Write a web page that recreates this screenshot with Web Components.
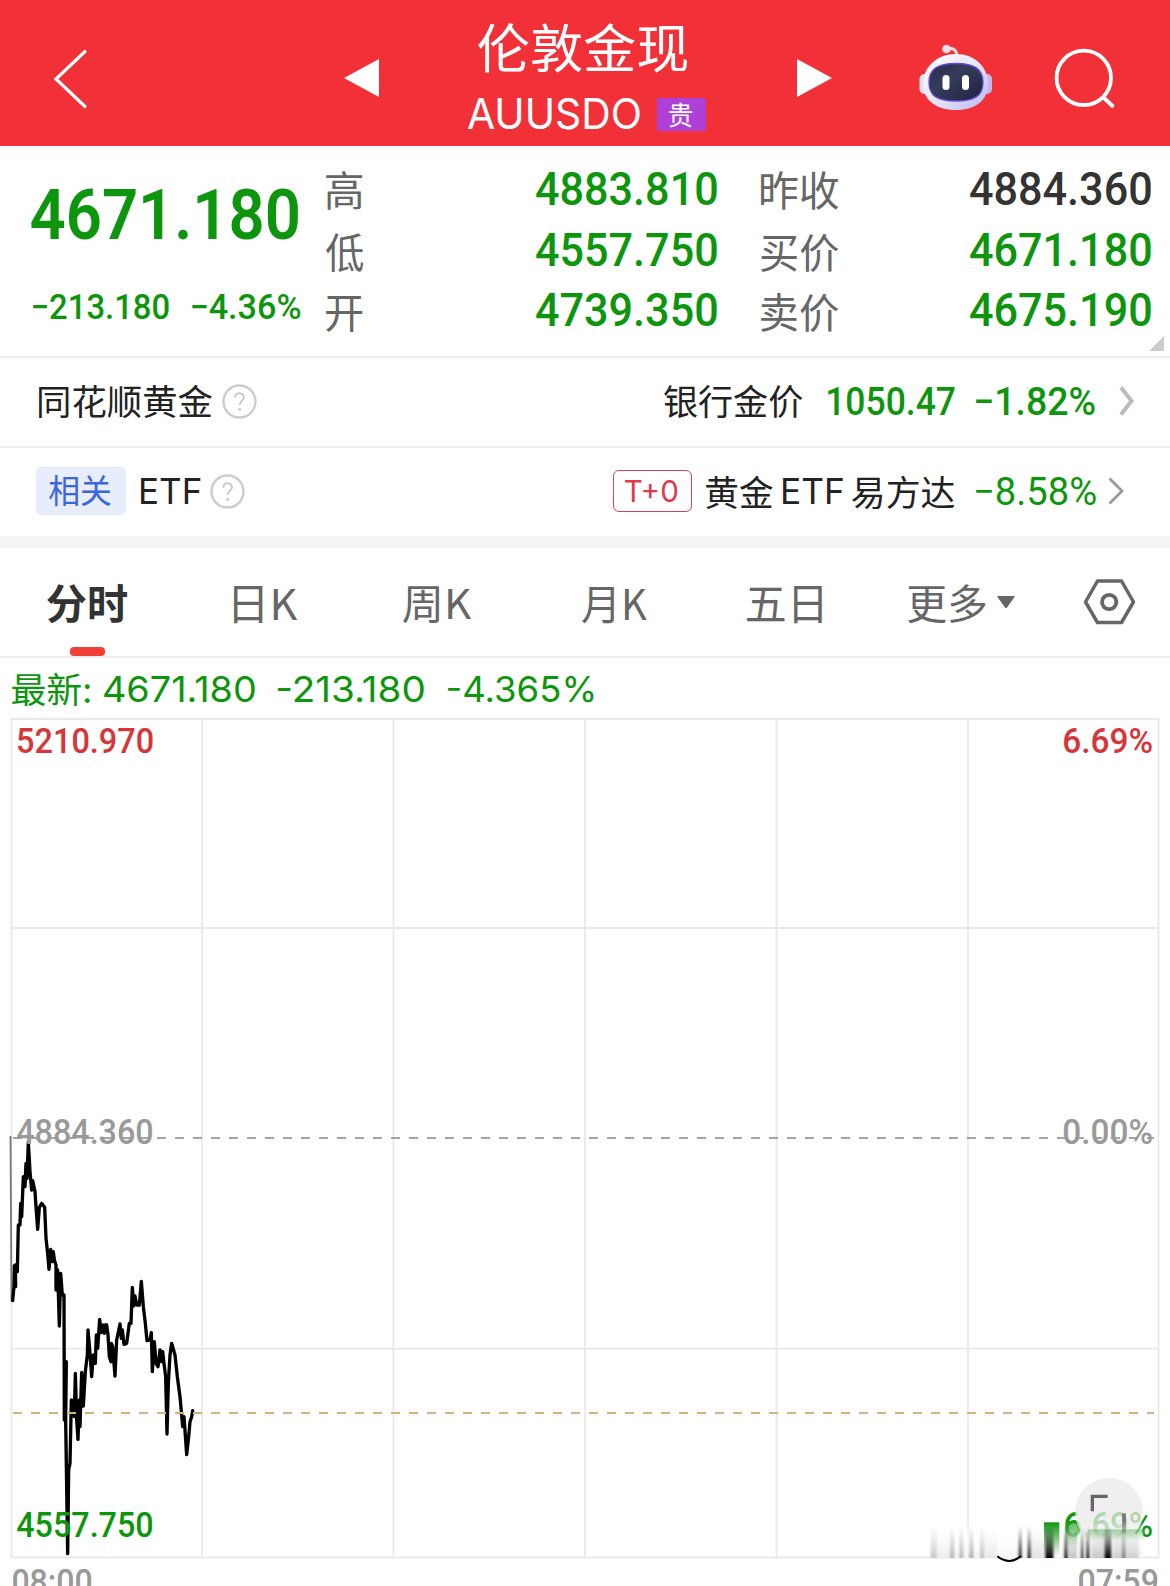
<!DOCTYPE html>
<html lang="zh-CN">
<head>
<meta charset="utf-8">
<title>伦敦金现</title>
<style>
html,body{margin:0;background:#fff}
body{width:1170px;height:1586px;overflow:hidden;font-family:"Noto Sans CJK SC",sans-serif}
</style>
</head>
<body>
<quote-page></quote-page>
<script>
const ctx = document.createElement('canvas').getContext('2d');
const FONTS = {
  cjk: '"Noto Sans CJK SC", sans-serif',
  num: 'Roboto, "Noto Sans CJK SC", sans-serif',
  ui: 'Inter, "Noto Sans CJK SC", sans-serif'
};

/* Text sized by its visible box: w and h are the extents of the glyphs. */
class InkText extends HTMLElement {
  connectedCallback() {
    const root = this.attachShadow({mode: 'open'});
    const w = +this.getAttribute('w'), h = +this.getAttribute('h');
    const wt = this.getAttribute('wt') || 400;
    const kind = this.getAttribute('f') || 'cjk';
    const fam = FONTS[kind];
    const drop = kind === 'cjk' ? .7 : kind === 'num' ? -.5 : 0;
    const text = this.textContent;
    ctx.font = `${wt} 200px ${fam}`;
    const m = ctx.measureText(text);
    const size = 200 * h / (m.actualBoundingBoxAscent + m.actualBoundingBoxDescent);
    const k = size / 200;
    const s = (w - .8) / ((m.actualBoundingBoxLeft + m.actualBoundingBoxRight) * k);
    root.innerHTML = `<style>
      :host{display:block;flex:none;width:${w}px;height:${h}px}
      span{display:block;width:max-content;white-space:pre;font:${wt} ${size}px/${h}px ${fam};transform-origin:0 0}
      i{display:inline-block;width:0;height:0}
    </style><span><slot></slot><i></i></span>`;
    const span = root.querySelector('span'), probe = root.querySelector('i');
    const base = probe.getBoundingClientRect().bottom - span.getBoundingClientRect().top;
    probe.remove();
    span.style.transform = `translate(${m.actualBoundingBoxLeft * k * s}px,${m.actualBoundingBoxAscent * k - base + drop}px) scaleX(${s})`;
  }
}

function define(name, css, html) {
  customElements.define(name, class extends HTMLElement {
    constructor() {
      super();
      this.attachShadow({mode: 'open'}).innerHTML = `<style>*{box-sizing:border-box}svg{display:block;flex:none}${css}</style>${html}`;
    }
  });
}

customElements.define('ink-text', InkText);

define('help-icon', ':host{display:block;flex:none;width:35px;height:35px}', `
<svg width="35" height="35" viewBox="0 0 35 35" fill="none" stroke="#ccc" stroke-width="2.4"><circle cx="17.5" cy="17.5" r="16"/><path d="M13.3 13.7c0-6 8.6-5.7 8.6-.4 0 3.5-4.3 3.5-4.3 7.7" stroke-width="2.1"/><circle cx="17.6" cy="25.3" r="1.5" fill="#ccc" stroke="none"/></svg>`);

define('app-header', `
:host{display:flex;align-items:flex-start;height:146px;background:#f13038;color:#fff}
.back{margin:48px 0 0 53px}.prev{margin:59px 0 0 256px}.next{margin:59px 0 0 91px}
.mid{width:238px;margin:23px 0 0 89px}.title{margin-left:10px}
.code{display:flex;margin-top:26px}
.tag{margin-left:16px;width:49px;height:33px;background:#ae40d8;border-radius:2px;padding:4px 0 0 12px}
.bot{margin:43px 0 0 85px}.find{margin:46px 0 0 59px}`, `
<svg class="back" width="35" height="62" viewBox="53 48 35 62" fill="none" stroke="#fff" stroke-width="3.2" stroke-linecap="round"><path d="M85 51.500 56 79l29 27.500"/></svg>
<svg class="prev" width="35" height="38" viewBox="0 0 35 38"><path d="M35 0v38L0 19z" fill="#fff"/></svg>
<div class="mid"><ink-text class="title" w="210" h="49">伦敦金现</ink-text>
<div class="code"><ink-text w="172.500" h="31.500" f="ui">AUUSDO</ink-text><div class="tag"><ink-text w="24" h="24">贵</ink-text></div></div></div>
<svg class="next" width="35" height="38" viewBox="0 0 35 38"><path d="M0 0v38l35-19z" fill="#fff"/></svg>
<svg class="bot" width="76" height="72" viewBox="918 42 76 72">
<defs><linearGradient id="shell" x1="0" y1="0" x2="1" y2="1"><stop offset="0" stop-color="#fff"/><stop offset=".55" stop-color="#e4e4f8"/><stop offset="1" stop-color="#b9b6f2"/></linearGradient>
<linearGradient id="face" x1="0" y1="0" x2="1" y2="1"><stop offset="0" stop-color="#252c49"/><stop offset=".4" stop-color="#353d5b"/><stop offset="1" stop-color="#1c2341"/></linearGradient></defs>
<path d="M948 48c6-2 10 1 10 8" fill="none" stroke="#f2dfea" stroke-width="3"/><circle cx="947.500" cy="48" r="4.300" fill="#f4dfe8"/>
<rect x="920.500" y="73" width="12" height="20" rx="5" fill="#dfdcf7"/><rect x="981" y="73" width="12" height="20" rx="5" fill="#c6b8f2"/>
<path d="M957 53c19 0 32 13 32 30 0 16-12 26-32 26s-33-10-33-26c0-17 14-30 33-30z" fill="url(#shell)"/>
<path d="M957 62.500c19 0 27 6 27 19s-8 18.500-27 18.500-27-5.500-27-18.500 8-19 27-19z" fill="url(#face)" stroke="#6548d8" stroke-width="1.300"/>
<rect x="943.500" y="74" width="7" height="15" rx="3.500" fill="#fff"/><rect x="963" y="74" width="7" height="15" rx="3.500" fill="#fff"/></svg>
<svg class="find" width="66" height="66" viewBox="1053 46 66 66" fill="none" stroke="#fff" stroke-width="3.800"><circle cx="1084.800" cy="77.800" r="27.200"/><path d="m1104 97 10.500 10"/></svg>`);

define('quote-summary', `
:host{display:flex;align-items:flex-start;height:212px;border-bottom:2px solid #eee;color:#0d960d}
.price{width:270px;margin:43px 0 0 31px}
.chg{display:flex;justify-content:space-between;margin:53.500px 0 0 2px;width:267.500px}
.col{display:flex;flex-direction:column;margin-top:25px}
.col>div{display:flex;justify-content:space-between;height:60.500px}
.a{width:392px;margin-left:24.500px}.b{width:391px;margin-left:43px}
.l{color:#666}.dark{color:#333}.corner{margin:190px 0 0 -3px}`, `
<div class="price"><ink-text w="268" h="51.500" f="num" wt="600">4671.180</ink-text>
<div class="chg"><ink-text w="136.500" h="26" f="num" wt="500">−213.180</ink-text><ink-text w="109" h="26" f="num" wt="500">−4.36%</ink-text></div></div>
<div class="col a">
<div><ink-text class="l" w="37" h="38">高</ink-text><ink-text w="181.500" h="34.500" f="num" wt="500">4883.810</ink-text></div>
<div><ink-text class="l" w="38" h="38" style="margin-top:1px">低</ink-text><ink-text w="181.500" h="34.500" f="num" wt="500">4557.750</ink-text></div>
<div><ink-text class="l" w="37" h="35.500" style="margin-top:2.500px">开</ink-text><ink-text w="181.500" h="34.500" f="num" wt="500">4739.350</ink-text></div></div>
<div class="col b">
<div><ink-text class="l" w="78" h="38">昨收</ink-text><ink-text class="dark" w="181.500" h="34.500" f="num" wt="500">4884.360</ink-text></div>
<div><ink-text class="l" w="78" h="38" style="margin-top:1px">买价</ink-text><ink-text w="181.500" h="34.500" f="num" wt="500">4671.180</ink-text></div>
<div><ink-text class="l" w="78" h="38" style="margin-top:.5px">卖价</ink-text><ink-text w="181.500" h="34.500" f="num" wt="500">4675.190</ink-text></div></div>
<svg class="corner" width="15" height="15"><path d="M15 0v15H0z" fill="#ccc"/></svg>`);

define('gold-row', `
:host{display:flex;align-items:center;height:90px;padding:0 35px 2px 39px;border-bottom:2px solid #eee;color:#222}
help-icon{margin-left:8.500px}.push{margin-left:auto}.g{color:#0d960d}`, `
<ink-text w="174" h="33.500">同花顺黄金</ink-text><help-icon></help-icon>
<ink-text class="push" w="139" h="33.500">银行金价</ink-text>
<ink-text class="g" style="margin-left:25px" w="127.500" h="28.500" f="num" wt="500">1050.47</ink-text>
<ink-text class="g" style="margin-left:21px" w="119.500" h="28.500" f="num" wt="500">−1.82%</ink-text>
<svg style="margin-left:23.500px" width="16" height="30" fill="none" stroke="#bbb" stroke-width="4"><path d="m2 1.500 10.500 13.500L2 28.500"/></svg>`);

define('etf-row', `
:host{display:flex;align-items:center;height:100px;padding:0 46px 2px 36px;border-bottom:12px solid #f4f4f4;color:#222}
help-icon{margin-left:9px}.g{color:#0d960d}
.rel{width:90px;height:48px;border-radius:5px;background:#e8edfc;color:#3c66e0;padding:8px 0 0 13px;margin-right:15px}
.t0{margin-left:auto;width:79px;height:42px;border:1.500px solid #cf4558;border-radius:6px;color:#e0384c;padding:9px 0 0 11px;margin-right:13.500px}
.name{display:flex;align-items:center}`, `
<div class="rel"><ink-text w="62.500" h="30.500">相关</ink-text></div>
<ink-text w="60" h="26" f="ui">ETF</ink-text><help-icon></help-icon>
<div class="t0"><ink-text w="53" h="22.500" f="ui">T+0</ink-text></div>
<div class="name"><ink-text w="67.500" h="33">黄金</ink-text><ink-text style="margin:0 8.500px 0 10px" w="60.500" h="25.500" f="ui">ETF</ink-text><ink-text w="103" h="33">易方达</ink-text></div>
<ink-text class="g" style="margin-left:21px" w="120.500" h="28.500" f="num" wt="400">−8.58%</ink-text>
<svg style="margin-left:11.500px" width="16" height="28" fill="none" stroke="#999" stroke-width="2.800"><path d="m1.500 1.500 12.500 12.500-12.500 12.500"/></svg>`);

define('period-tabs', `
:host{display:flex;align-items:flex-start;height:110px;padding-top:36px;border-bottom:2px solid #eee;color:#666}
.on{width:81px;margin-left:47px;color:#333}
.on i{display:block;width:35.500px;height:9px;border-radius:4px;background:#f04038;margin:24.500px 0 0 22.500px}`, `
<div class="on"><ink-text w="81" h="38.500" wt="700">分时</ink-text><i></i></div>
<ink-text style="margin:1.500px 0 0 106px" w="64" h="36.500">日K</ink-text>
<ink-text style="margin:1.500px 0 0 105px" w="69" h="36.500">周K</ink-text>
<ink-text style="margin:1.500px 0 0 109.500px" w="65.500" h="36.500">月K</ink-text>
<ink-text style="margin:1.500px 0 0 99.500px" w="75.500" h="36.500">五日</ink-text>
<ink-text style="margin:0 0 0 86px" w="78.500" h="38">更多</ink-text>
<svg style="margin:12px 0 0 10.500px" width="18" height="13"><path d="M1 0h16q1 0 .5 1L10 11.500q-1 1-2 0L.5 1Q0 0 1 0z" fill="#666"/></svg>
<svg style="margin:-6px 0 0 67px" width="54" height="48" viewBox="1083 578 54 48" fill="none" stroke="#666"><path d="M1098.500 581h24l12 21-12 20.500h-24l-12-20.500z" stroke-width="3.500" stroke-linejoin="round"/><circle cx="1110.200" cy="602" r="7.200" stroke-width="3.800"/></svg>`);

define('latest-line', `
:host{display:flex;align-items:flex-start;height:52px;padding:14.500px 0 0 12px;color:#0d960d}`, `
<ink-text w="78.500" h="32.500">最新:</ink-text>
<ink-text style="margin:3px 0 0 13.500px" w="151.500" h="26.500" f="ui">4671.180</ink-text>
<ink-text style="margin:3px 0 0 22.500px" w="146.500" h="26.500" f="ui">-213.180</ink-text>
<ink-text style="margin:3px 0 0 23px" w="146" h="26.500" f="ui">-4.365%</ink-text>`);

const pts = '38,572 42,530 43,467 47,530 46,465 52,485 55,345 60,345 62,280 65,320 70,200 75,230 78,160 81,205 85,97 90,185 95,240 98,212 105,245 108,290 113,358 118,292 125,280 134,292 138,385 143,430 147,478 152,418 156,455 160,425 163,450 168,465 168,540 173,480 178,648 182,490 187,555 192,555 193,930 199,755 197,930 203,1331 206,1080 210,1060 214,870 218,915 222,870 223,920 226,790 230,930 234,988 238,870 240,950 245,787 250,888 256,785 262,735 264,660 270,730 275,800 280,735 286,760 289,675 293,715 299,628 304,668 310,645 313,670 316,645 320,645 324,675 328,740 333,755 334,700 338,710 345,798 350,690 360,642 364,685 367,660 372,703 380,700 388,640 393,640 397,532 401,588 405,558 410,585 418,585 424,514 430,590 436,640 441,692 450,690 454,668 457,785 463,695 468,760 474,770 480,720 484,755 488,725 492,760 497,800 501,972 505,820 510,735 515,700 525,735 532,800 540,860 548,950 552,920 557,990 560,1034 566,980 570,935 575,920 578,902';
const streaks = [[62,18,.18],[80,40,.03],[120,13,.25],[148,12,.25],[178,12,.3],[210,12,.22],[222,40,.05],[326,9,.9],[353,9,.9],[364,40,.08],[406,24,1],[463,9,.95],[473,28,.2],[512,9,.7],[529,9,.9],[545,40,.18],[584,20,1],[610,76,.15],[636,10,.4]]
  .map(([x, w, o]) => `<rect x="${x}" y="228" width="${w}" height="96" fill="url(#smear)" opacity="${o}"/>`).join('');

define('minute-chart', `
:host{display:block;position:relative;height:876px}
ink-text{position:absolute}svg.over{position:absolute;left:0;top:0}
.r{color:#d63539}.n{color:#999}.g{color:#0d960d}`, `
<svg width="1170" height="876" viewBox="0 710 1170 876" fill="none">
<path d="M11.500 719H1158.500V1557.500H11.500zM202 719v838M393.500 719v838M585 719v838M776.500 719v838M968 719v838M12 928h1146M12 1348.700h1146" stroke="#e9e9e9" stroke-width="1.800"/>
<path d="M13 1138H1154" stroke="#888" stroke-width="1.600" stroke-dasharray="9 9"/>
<path d="M10.500 1136 11.500 1301" stroke="#777" stroke-width="1.800"/>
<g transform="translate(0 1110) scale(.33333)"><polyline points="${pts}" stroke="#000" stroke-width="10" stroke-linejoin="round" stroke-linecap="round"/></g>
<path d="M13 1413H1154" stroke="#d0b47c" stroke-width="1.800" stroke-dasharray="9 9"/>
</svg>
<ink-text class="r" style="left:18px;top:17.500px" w="135.500" h="26" f="num" wt="500">5210.970</ink-text>
<ink-text class="r" style="left:1064px;top:17.500px" w="88.500" h="26" f="num" wt="500">6.69%</ink-text>
<ink-text class="n" style="left:17px;top:409px" w="136" h="26" f="num" wt="500">4884.360</ink-text>
<ink-text class="n" style="left:1064px;top:409px" w="88.500" h="26" f="num" wt="500">0.00%</ink-text>
<ink-text class="g" style="left:17px;top:801.500px" w="136" h="26" f="num" wt="500">4557.750</ink-text>
<ink-text class="g" style="left:1065px;top:801.500px" w="87.500" h="26" f="num" wt="500">6.69%</ink-text>
<ink-text class="n" style="left:12.500px;top:858.500px" w="79" h="26" f="num" wt="500">08:00</ink-text>
<ink-text class="n" style="left:1079px;top:858.500px" w="79" h="26" f="num" wt="500">07:59</ink-text>
<svg class="over" width="1170" height="876" viewBox="0 710 1170 876" fill="none">
<defs><linearGradient id="smear" x1="0" y1="0" x2="0" y2="1"><stop offset="0" stop-color="#000" stop-opacity="0"/><stop offset="1" stop-color="#000"/></linearGradient>
<linearGradient id="haze" x1="0" y1="0" x2="0" y2="1"><stop offset="0" stop-color="#fff" stop-opacity="0"/><stop offset=".5" stop-color="#fff" stop-opacity=".9"/><stop offset="1" stop-color="#f5f5f5"/></linearGradient>
<linearGradient id="gr" x1="0" y1="0" x2="0" y2="1"><stop offset="0" stop-color="#0d960d"/><stop offset="1" stop-color="#0d960d" stop-opacity="0"/></linearGradient>
<filter id="soft" x="-5%" y="-5%" width="110%" height="110%"><feGaussianBlur stdDeviation="2.500 .5"/></filter></defs>
<circle cx="1109" cy="1512" r="34" fill="#e9e9e9" fill-opacity=".75"/>
<g transform="translate(910 1450) scale(.33333)">
<path d="M547 184v-45h46" stroke="#666" stroke-width="10"/><path d="M642 190v60" stroke="#777" stroke-width="11"/>
<rect x="60" y="215" width="640" height="109" fill="url(#haze)"/>
<path d="M466 228q15-22 34 0l3 62h-39z" fill="url(#gr)" opacity=".7"/>
<rect x="535" y="238" width="170" height="35" fill="url(#gr)" opacity=".35"/>
<rect x="402" y="217" width="46" height="100" fill="url(#gr)"/>
<g filter="url(#soft)">${streaks}</g>
<path d="M262 319q38 28 71-1" stroke="#000" stroke-width="6"/>
</g></svg>`);

define('quote-page', ':host{display:flex;flex-direction:column;width:1170px;height:1586px;overflow:hidden;background:#fff}', `
<app-header></app-header><quote-summary></quote-summary><gold-row></gold-row><etf-row></etf-row><period-tabs></period-tabs><latest-line></latest-line><minute-chart></minute-chart>`);
</script>
</body>
</html>
